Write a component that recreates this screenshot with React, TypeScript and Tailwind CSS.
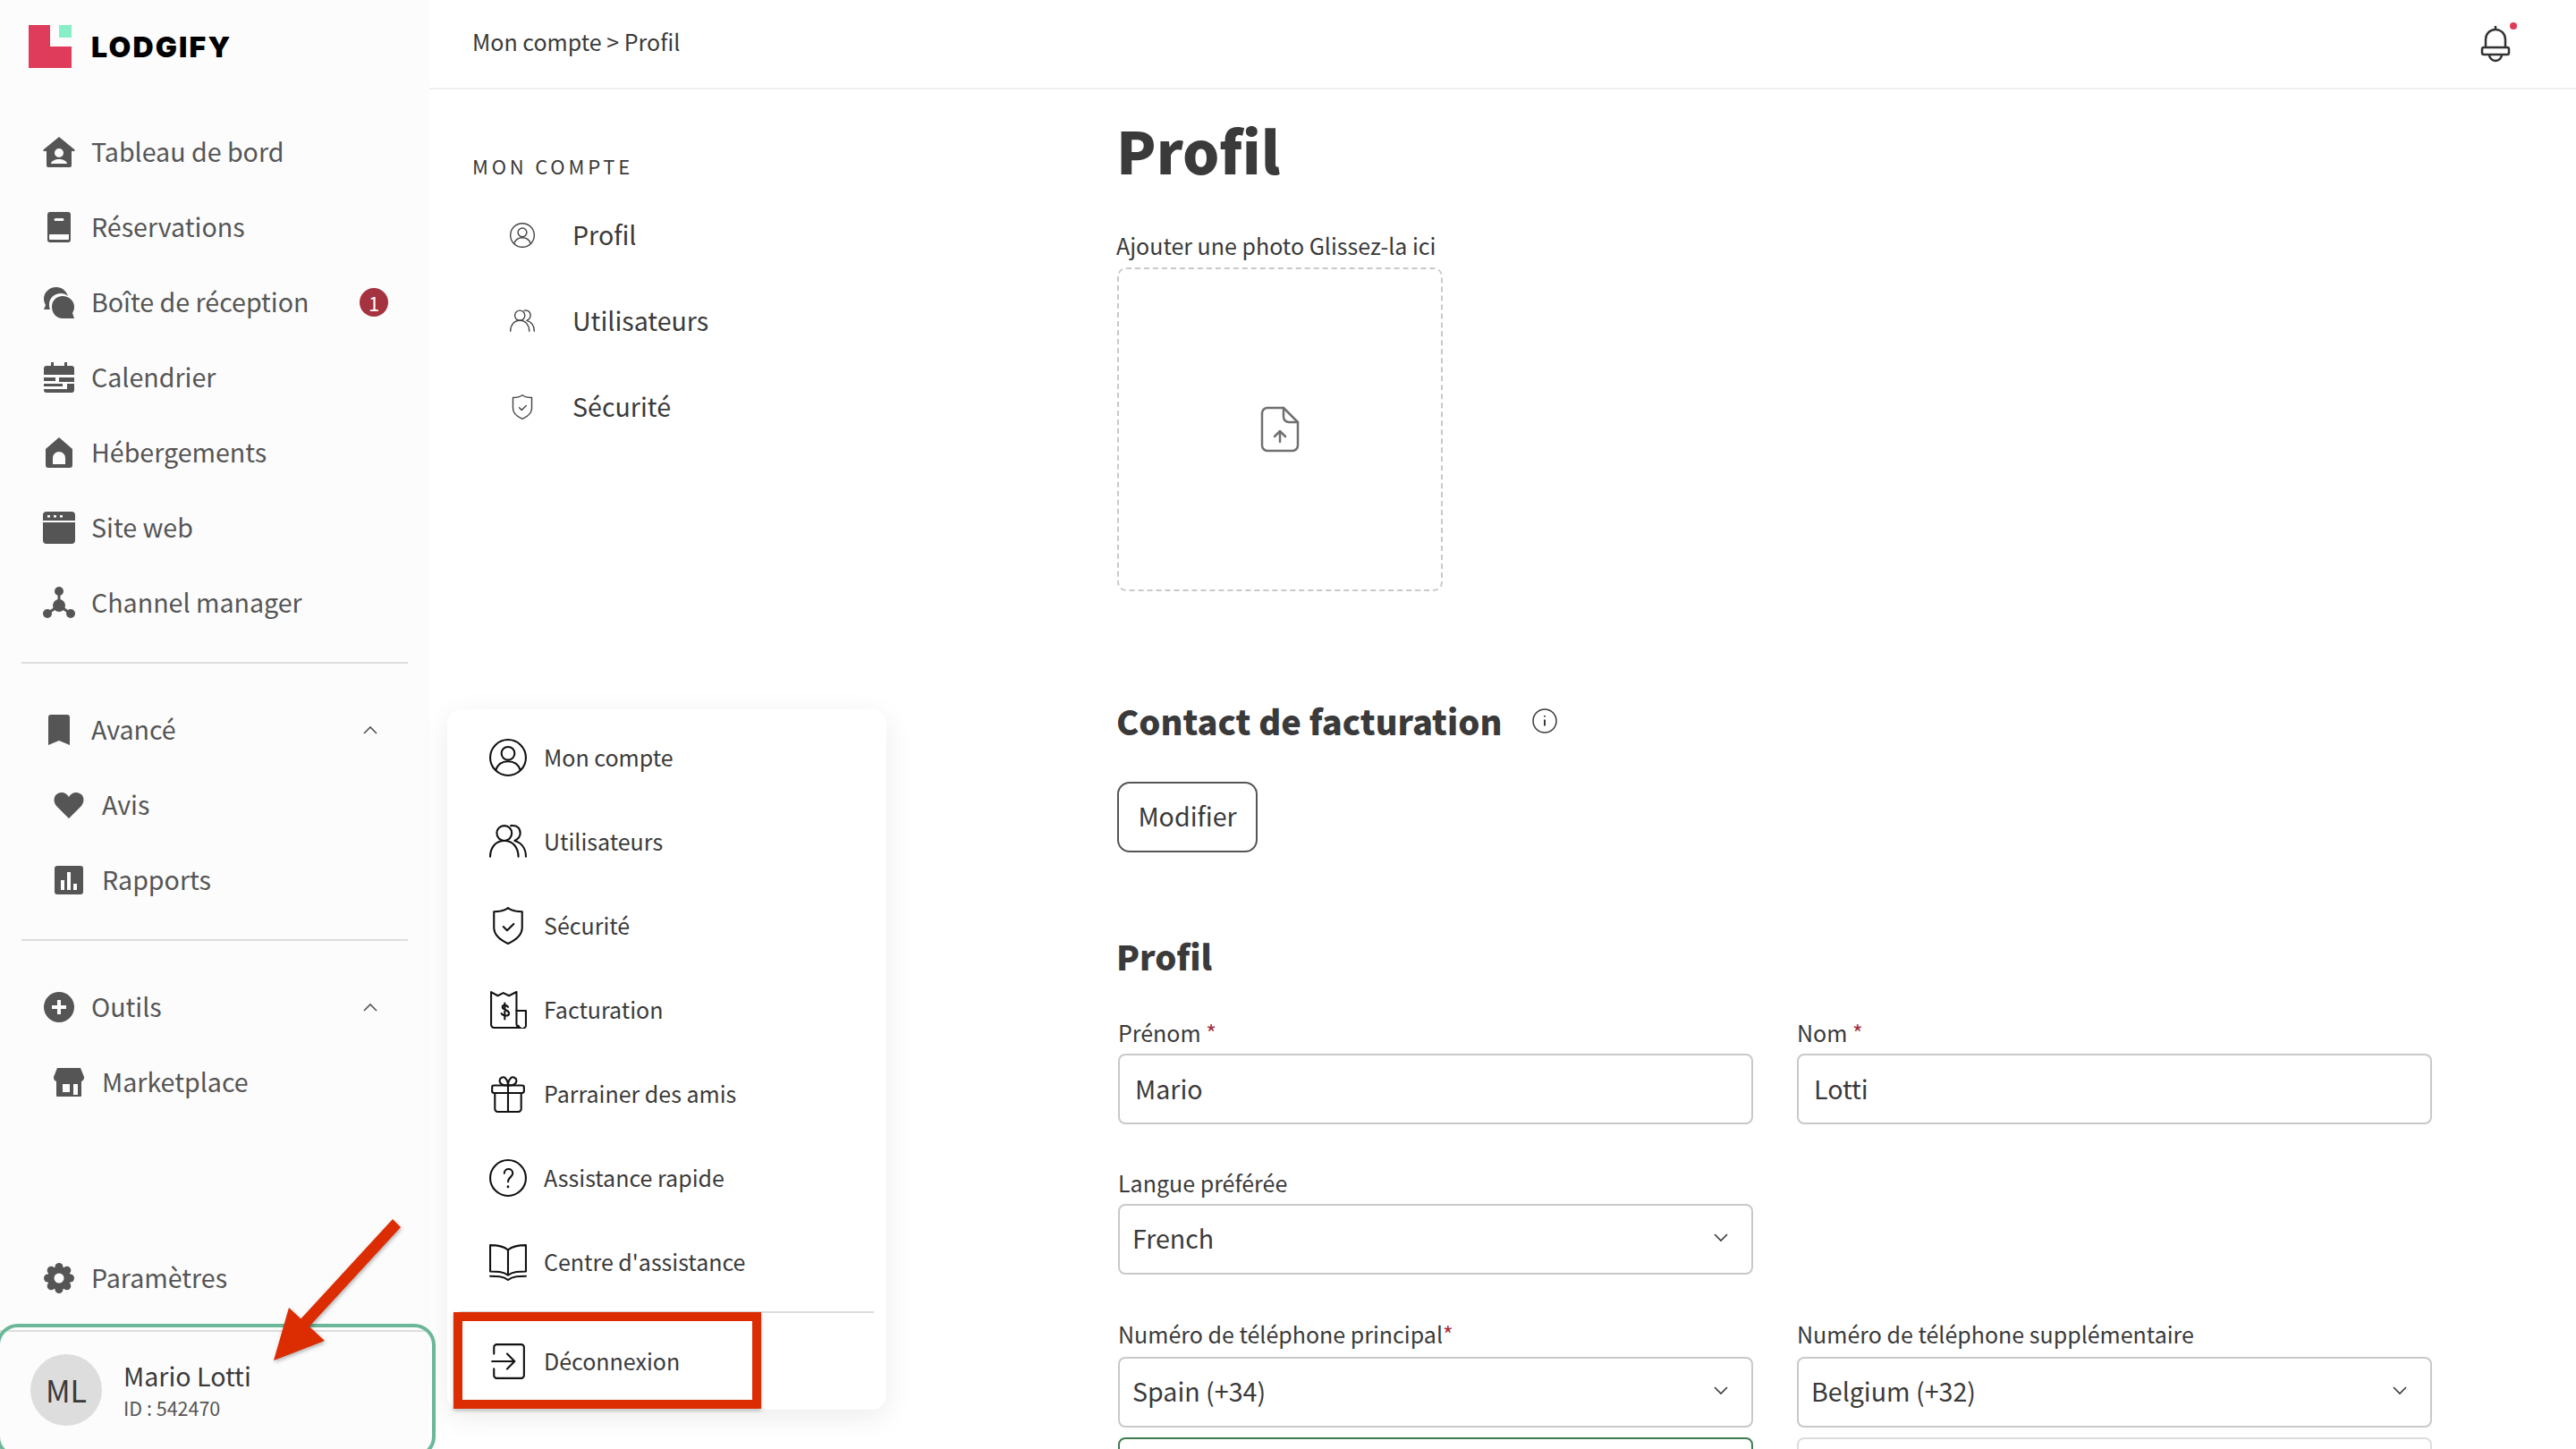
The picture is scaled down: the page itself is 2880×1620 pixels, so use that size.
import type { ReactNode } from "react";

function Logo() {
  return (
    <svg width="48" height="48" viewBox="0 0 48 48" className="shrink-0">
      <path d="M0 0H24V24H48V48H0Z" fill="#df3b5a" />
      <rect x="34" y="0" width="14" height="14" fill="#86efc6" />
    </svg>
  );
}

function Glyph({ children }: { children: ReactNode }) {
  return (
    <svg width="36" height="36" viewBox="0 0 36 36" fill="#555555">
      {children}
    </svg>
  );
}

const navIcons: Record<string, ReactNode> = {
  home: (
    <Glyph>
      <path
        fillRule="evenodd"
        d="M18 1 35 15a1 1 0 0 1-1 2h-2v16a2 2 0 0 1-2 2H6a2 2 0 0 1-2-2V17H2a1 1 0 0 1-1-2ZM18 14a5 5 0 1 0 0 10 5 5 0 0 0 0-10ZM9 31h18c0-3-5-5-9-5s-9 2-9 5Z"
      />
    </Glyph>
  ),
  book: (
    <Glyph>
      <path
        fillRule="evenodd"
        d="M8 1h20a3 3 0 0 1 3 3v28a3 3 0 0 1-3 3H8a3 3 0 0 1-3-3V4a3 3 0 0 1 3-3Zm6 7a1.500 1.500 0 0 0 0 3h8a1.500 1.500 0 0 0 0-3ZM8 26a1 1 0 0 0-1 1v4a1 1 0 0 0 1 1h20a1 1 0 0 0 1-1v-5Z"
      />
    </Glyph>
  ),
  chat: (
    <Glyph>
      <path d="M15 1C7 1 1 7 1 14c0 3 1 5 2 7l-2 5h7c-1-2-1-4-1-6 0-7 6-12 13-12 3 0 6 1 8 3-2-6-7-10-13-10Z" />
      <path d="M22 11c7 0 13 5 13 12 0 3-1 5-2 7l2 6H22c-7 0-12-6-12-13s5-12 12-12Z" />
    </Glyph>
  ),
  calendar: (
    <Glyph>
      <path
        fillRule="evenodd"
        d="M9 1h3v4h12V1h3v4h5a3 3 0 0 1 3 3v7H1V8a3 3 0 0 1 3-3h5ZM1 18h13v4H1Zm17 0h17v5H18Zm-17 7h21v3H1Zm26 0h8v7a3 3 0 0 1-3 3H4a3 3 0 0 1-3-3v-1h26Z"
      />
    </Glyph>
  ),
  house: (
    <Glyph>
      <path
        fillRule="evenodd"
        d="M18 1 33 14v18a3 3 0 0 1-3 3H6a3 3 0 0 1-3-3V14Zm0 16a7 7 0 0 0-7 7v7h14v-7a7 7 0 0 0-7-7Z"
      />
    </Glyph>
  ),
  web: (
    <Glyph>
      <path
        fillRule="evenodd"
        d="M4 0h28a4 4 0 0 1 4 4v6H0V4a4 4 0 0 1 4-4Zm1 4v2.500h3V4Zm7 0v2.500h3V4Zm7 0v2.500h3V4ZM0 12h36v20a4 4 0 0 1-4 4H4a4 4 0 0 1-4-4Z"
      />
    </Glyph>
  ),
  network: (
    <Glyph>
      <circle cx="18" cy="5" r="5" />
      <circle cx="5" cy="30" r="5" />
      <circle cx="31" cy="30" r="5" />
      <circle cx="18" cy="21" r="7" />
      <path d="M18 8v10M5 30l13-9M31 30l-13-9" stroke="#555555" strokeWidth="3" />
    </Glyph>
  ),
  bookmark: (
    <Glyph>
      <path d="M9 1h18a3 3 0 0 1 3 3v31l-12-5-12 5V4a3 3 0 0 1 3-3Z" />
    </Glyph>
  ),
  heart: (
    <Glyph>
      <path d="M18 33 4 19C0 14 1 7 6 5c4-2 9-1 12 4 3-5 8-6 12-4 5 2 6 9 2 14Z" />
    </Glyph>
  ),
  chart: (
    <Glyph>
      <path
        fillRule="evenodd"
        d="M5 2h26a3 3 0 0 1 3 3v26a3 3 0 0 1-3 3H5a3 3 0 0 1-3-3V5a3 3 0 0 1 3-3Zm4 16v11h4V18Zm7-9v20h4V9Zm7 13v7h4v-7Z"
      />
    </Glyph>
  ),
  plus: (
    <Glyph>
      <path
        fillRule="evenodd"
        d="M18 1a17 17 0 1 0 0 34 17 17 0 0 0 0-34Zm-2 9h4v6h6v4h-6v6h-4v-6h-6v-4h6Z"
      />
    </Glyph>
  ),
  store: (
    <Glyph>
      <path
        fillRule="evenodd"
        d="M5 2h26l4 10a5 5 0 0 1-3 5v16a1 1 0 0 1-1 1H5a1 1 0 0 1-1-1V17a5 5 0 0 1-3-5Zm6 18v9h8v-9Zm12 0v12h5V20Z"
      />
    </Glyph>
  ),
  gear: (
    <Glyph>
      <circle cx="18" cy="18" r="13" />
      <circle cx="18" cy="5.500" r="4.500" />
      <circle cx="18" cy="30.500" r="4.500" />
      <circle cx="5.500" cy="18" r="4.500" />
      <circle cx="30.500" cy="18" r="4.500" />
      <circle cx="9.200" cy="9.200" r="4.500" />
      <circle cx="26.800" cy="9.200" r="4.500" />
      <circle cx="9.200" cy="26.800" r="4.500" />
      <circle cx="26.800" cy="26.800" r="4.500" />
      <circle cx="18" cy="18" r="5.500" fill="#fcfcfc" />
    </Glyph>
  ),
};

function LineIcon({ size, children, className }: { size: number; children: ReactNode; className?: string }) {
  return (
    <svg
      width={size}
      height={size}
      viewBox="0 0 40 40"
      fill="none"
      stroke="currentColor"
      strokeWidth="2"
      strokeLinecap="round"
      strokeLinejoin="round"
      className={className}
    >
      {children}
    </svg>
  );
}

const accountIcon = (
  <>
    <circle cx="20" cy="20" r="19" />
    <circle cx="20" cy="15.500" r="7" />
    <path d="M7 33c2-6 7-9 13-9s11 3 13 9" />
  </>
);
const usersIcon = (
  <>
    <circle cx="16" cy="11" r="8" />
    <path d="M1 36c0-10 6-17 15-17s15 7 15 17" />
    <path d="M23 3c7-1 10 3 10 8 0 4-2 6-6 8 7 2 12 8 12 17" />
  </>
);
const shieldIcon = (
  <>
    <path d="M20 1c4 3 9 4 15 4v17c0 8-6 13-15 17C11 35 5 30 5 22V5c6 0 11-1 15-4Z" />
    <path d="m15 21 4 4 7-7" />
  </>
);

const menuItems: { label: string; icon: ReactNode }[] = [
  { label: "Mon compte", icon: accountIcon },
  { label: "Utilisateurs", icon: usersIcon },
  { label: "Sécurité", icon: shieldIcon },
  {
    label: "Facturation",
    icon: (
      <>
        <path d="M2 1l7 4 6-3 6 3 8-4v34a4 4 0 0 0 4 4H5a3 3 0 0 1-3-3Z" />
        <path d="M29 21h10v14a4 4 0 0 1-8 2" />
        <path d="M20 17c-1-2-6-3-6 0 0 4 7 2 7 7 0 3-6 3-8 0M16.500 13v17" />
      </>
    ),
  },
  {
    label: "Parrainer des amis",
    icon: (
      <>
        <rect x="3" y="11" width="34" height="8" rx="2" />
        <path d="M6 19v17a3 3 0 0 0 3 3h22a3 3 0 0 0 3-3V19M20 11v28" />
        <path d="M20 11c-6 0-9-2-9-5s4-5 6-3 3 5 3 8c0-3 1-6 3-8s6 0 6 3-3 5-9 5Z" />
      </>
    ),
  },
  {
    label: "Assistance rapide",
    icon: (
      <>
        <circle cx="20" cy="20" r="19" />
        <path d="M16 15c0-6 9-6 9 0 0 4-5 4-5 9" />
        <path d="M20 29v.5" strokeWidth="2.500" />
      </>
    ),
  },
  {
    label: "Centre d'assistance",
    icon: (
      <>
        <path d="M20 7C15 3 8 2 1 2v28c7 0 14 0 19 4 5-4 12-4 19-4V2c-7 0-14 1-19 5Zm0 0v27" />
        <path d="M1 35c7 0 14 0 19 4 5-4 12-4 19-4" />
      </>
    ),
  },
];

function NavRow({
  label,
  icon,
  child,
  right,
}: {
  label: string;
  icon: string;
  child?: boolean;
  right?: ReactNode;
}) {
  return (
    <div className={`flex h-[84px] items-center ${child ? "pl-[59px]" : "pl-[48px]"} pr-[48px]`}>
      <span className="flex w-[36px] shrink-0 items-center justify-center">{navIcons[icon]}</span>
      <span className={`${child ? "ml-[19px]" : "ml-[18px]"} mb-[3px] flex-1 text-[28.600px] leading-[44px] text-[#555555]`}>
        {label}
      </span>
      {right}
    </div>
  );
}

function Chevron({ up }: { up?: boolean }) {
  return (
    <svg width="20" height="12" viewBox="0 0 20 12" fill="none" stroke="currentColor" strokeWidth="1.600">
      <path d={up ? "M3 10 10 3l7 7" : "M3 2l7 7 7-7"} />
    </svg>
  );
}

function Sidebar() {
  return (
    <aside className="flex h-full w-[480px] shrink-0 flex-col bg-[#fcfcfc]">
      <div className="flex h-[128px] shrink-0 items-start pl-[32px] pt-[28px]">
        <Logo />
        <span className="ml-[22px] mt-[6px] font-['Inter',sans-serif] text-[32px] leading-[38px] font-black tracking-[2.200px] text-black">
          LODGIFY
        </span>
      </div>
      <NavRow label="Tableau de bord" icon="home" />
      <NavRow label="Réservations" icon="book" />
      <NavRow
        label="Boîte de réception"
        icon="chat"
        right={
          <span className="mr-[-2px] flex h-[32px] w-[32px] items-center justify-center rounded-full bg-[#a5323f] text-[22px] leading-none text-white">
            1
          </span>
        }
      />
      <NavRow label="Calendrier" icon="calendar" />
      <NavRow label="Hébergements" icon="house" />
      <NavRow label="Site web" icon="web" />
      <NavRow label="Channel manager" icon="network" />
      <div className="mx-[24px] mt-[24px] h-[2px] bg-[#dddddd]" />
      <div className="mt-[32px]">
        <NavRow label="Avancé" icon="bookmark" right={<span className="mr-[8px] text-[#555555]"><Chevron up /></span>} />
        <NavRow label="Avis" icon="heart" child />
        <NavRow label="Rapports" icon="chart" child />
      </div>
      <div className="mx-[24px] mt-[24px] h-[2px] bg-[#dddddd]" />
      <div className="mt-[32px]">
        <NavRow label="Outils" icon="plus" right={<span className="mr-[8px] text-[#555555]"><Chevron up /></span>} />
        <NavRow label="Marketplace" icon="store" child />
      </div>
      <div className="mt-auto">
        <NavRow label="Paramètres" icon="gear" />
        <div className="mt-[16px] flex h-[133px] items-start border-t-2 border-[#dddddd] pl-[34px] pt-[25px]">
          <span className="flex h-[80px] w-[80px] items-center justify-center rounded-full bg-[#dddddd] text-[34px] leading-none text-[#3a3a3a]">
            ML
          </span>
          <div className="ml-[24px] flex flex-col pt-[5px]">
            <span className="text-[28.600px] leading-[38px] text-[#3a3a3a]">Mario Lotti</span>
            <span className="mt-[2px] text-[21.500px] leading-[30px] text-[#555555]">ID : 542470</span>
          </div>
        </div>
      </div>
    </aside>
  );
}

function AccountNav() {
  const rows: { label: string; icon: ReactNode }[] = [
    { label: "Profil", icon: accountIcon },
    { label: "Utilisateurs", icon: usersIcon },
    { label: "Sécurité", icon: shieldIcon },
  ];
  return (
    <nav className="w-[768px] shrink-0 pl-[48px] pt-[67px] text-[#3a3a3a]">
      <div className="text-[22px] leading-[36px] tracking-[3.800px]">MON COMPTE</div>
      <div className="mt-[12px]">
        {rows.map((r) => (
          <div key={r.label} className="flex h-[96px] items-center pl-[40px]">
            <LineIcon size={28} className="ml-[2px] text-[#444444]">
              {r.icon}
            </LineIcon>
            <span className="mb-[3px] ml-[42px] text-[28.600px] leading-[44px]">{r.label}</span>
          </div>
        ))}
      </div>
    </nav>
  );
}

function Req() {
  return <span className="text-[#a5323f]">*</span>;
}

function TextField({ value }: { value: string }) {
  return (
    <input
      readOnly
      defaultValue={value}
      className="h-[79px] w-full rounded-[8px] border-2 border-[#c9c9c9] bg-white pb-[3px] pl-[17px] text-[28.600px] text-[#3a3a3a] outline-none"
    />
  );
}

function SelectField({ value }: { value: string }) {
  return (
    <div className="flex h-[79px] w-full items-center justify-between rounded-[8px] border-2 border-[#c9c9c9] bg-white pb-[3px] pl-[14px] pr-[24px] text-[28.600px] text-[#3a3a3a]">
      <span>{value}</span>
      <Chevron />
    </div>
  );
}

function Label({ children, className }: { children: ReactNode; className?: string }) {
  return <div className={`mb-[8px] text-[25px] leading-[32px] text-[#3a3a3a] ${className ?? ""}`}>{children}</div>;
}

function ProfileForm() {
  return (
    <main className="min-w-0 flex-1 text-[#3a3a3a]">
      <h1 className="mt-[27px] text-[65px] leading-[80px] font-black">Profil</h1>
      <div className="mt-[49px] text-[25px] leading-[36px]">Ajouter une photo Glissez-la ici</div>
      <div className="ml-[1px] mt-[7px] flex h-[362px] w-[364px] items-center justify-center rounded-[10px] border-2 border-dashed border-[#c9c9c9]">
        <svg width="44" height="52" viewBox="0 0 44 52" fill="none" stroke="#707070" strokeWidth="2.500" strokeLinecap="round" strokeLinejoin="round">
          <path d="M26 2H8a6 6 0 0 0-6 6v36a6 6 0 0 0 6 6h28a6 6 0 0 0 6-6V18Z" />
          <path d="M26 2v10a6 6 0 0 0 6 6h10" />
          <path d="M22 40V28m-6 6 6-6 6 6" />
        </svg>
      </div>
      <div className="mt-[117px] flex items-center">
        <h2 className="text-[38px] leading-[56px] font-black">Contact de facturation</h2>
        <svg width="28" height="28" viewBox="0 0 28 28" fill="none" stroke="#3a3a3a" strokeWidth="1.500" className="ml-[34px]">
          <circle cx="14" cy="14" r="13" />
          <path d="M14 12.500v7M14 8v1.500" strokeWidth="2" />
        </svg>
      </div>
      <button className="ml-[1px] mt-[40px] h-[79px] w-[157px] rounded-[14px] border-2 border-[#555555] pb-[3px] text-[28.600px] text-[#3a3a3a]">
        Modifier
      </button>
      <h2 className="mt-[94px] text-[38px] leading-[44px] font-black">Profil</h2>
      <div className="mt-[47px] grid w-[1471px] grid-cols-2 gap-x-[49px] pl-[2px]">
        <div>
          <Label>
            Prénom <Req />
          </Label>
          <TextField value="Mario" />
        </div>
        <div>
          <Label>
            Nom <Req />
          </Label>
          <TextField value="Lotti" />
        </div>
        <div className="mt-[49px]">
          <Label>Langue préférée</Label>
          <SelectField value="French" />
        </div>
        <div />
        <div className="mt-[50px]">
          <Label className="mb-[10px]">
            Numéro de téléphone principal
            <Req />
          </Label>
          <SelectField value="Spain (+34)" />
        </div>
        <div className="mt-[50px]">
          <Label className="mb-[10px]">Numéro de téléphone supplémentaire</Label>
          <SelectField value="Belgium (+32)" />
        </div>
        <div className="mt-[11px] h-[79px] rounded-[8px] border-2 border-[#3f7d50]" />
        <div className="mt-[11px] h-[79px] rounded-[8px] border-2 border-[#dddddd]" />
      </div>
    </main>
  );
}

function UserMenu() {
  return (
    <div className="absolute left-[500px] top-[793px] w-[491px] rounded-[16px] bg-white text-[#3a3a3a] shadow-[0_8px_32px_rgba(0,0,0,0.08)]">
      <div className="pt-[7px]">
        {menuItems.map((m) => (
          <div key={m.label} className="flex h-[94px] items-center pl-[47px]">
            <LineIcon size={42} className="text-[#111111]">
              {m.icon}
            </LineIcon>
            <span className="mb-[2px] ml-[19px] text-[25px] leading-[36px]">{m.label}</span>
          </div>
        ))}
      </div>
      <div className="mx-[14px] mt-[8px] h-[2px] bg-[#dddddd]" />
      <div className="flex h-[108px] items-center pl-[47px]">
        <LineIcon size={42} className="text-[#111111]">
          <path d="M5 12V5a3 3 0 0 1 3-3h26a3 3 0 0 1 3 3v30a3 3 0 0 1-3 3H8a3 3 0 0 1-3-3v-7" />
          <path d="M3 20h24m-8-8 8 8-8 8" />
        </LineIcon>
        <span className="mb-[2px] ml-[19px] text-[25px] leading-[36px]">Déconnexion</span>
      </div>
    </div>
  );
}

export default function App() {
  return (
    <div className="relative flex h-[1620px] w-[2880px] overflow-hidden bg-white font-['Noto_Sans_CJK_JP','Noto_Sans',sans-serif]">
      <Sidebar />
      <div className="flex h-full min-w-0 flex-1 flex-col">
        <header className="flex h-[100px] shrink-0 items-center justify-between border-b-2 border-[#f0f0f0] pb-[7px] pl-[48px] pr-[72px]">
          <span className="text-[25px] leading-[36px] text-[#3a3a3a]">Mon compte &gt; Profil</span>
          <span className="relative mt-[6px] flex">
            <svg width="36" height="42" viewBox="0 0 36 42" fill="none" stroke="#333333" strokeWidth="2.500">
              <path d="M18 1v4M7 25V16a11 11 0 0 1 22 0v9" />
              <rect x="3" y="25" width="30" height="8" rx="2" />
              <path d="M11 33a7 7 0 0 0 14 0" />
            </svg>
            <span className="absolute right-[-6px] top-[-3px] h-[8px] w-[8px] rounded-full bg-[#df3b5a]" />
          </span>
        </header>
        <div className="flex min-h-0 flex-1">
          <AccountNav />
          <ProfileForm />
        </div>
      </div>
      <UserMenu />

      {/* tutorial annotations over the screenshot */}
      <div className="absolute left-[-4px] top-[1480px] h-[150px] w-[491px] rounded-[24px] border-4 border-[#6bb899]" />
      <div className="absolute left-[507px] top-[1467px] h-[108px] w-[344px] border-[10px] border-[#dc2c02] shadow-[0_2px_4px_rgba(0,0,0,0.25)]" />
      <svg className="absolute left-[290px] top-[1355px] drop-shadow-[1px_2px_2px_rgba(0,0,0,0.3)]" width="170" height="180" viewBox="290 1355 170 180">
        <path d="M448 1372 343 1486l-9-9 105-114Z M306 1521l17-59 40 37Z" fill="#dc2c02" />
      </svg>
    </div>
  );
}
